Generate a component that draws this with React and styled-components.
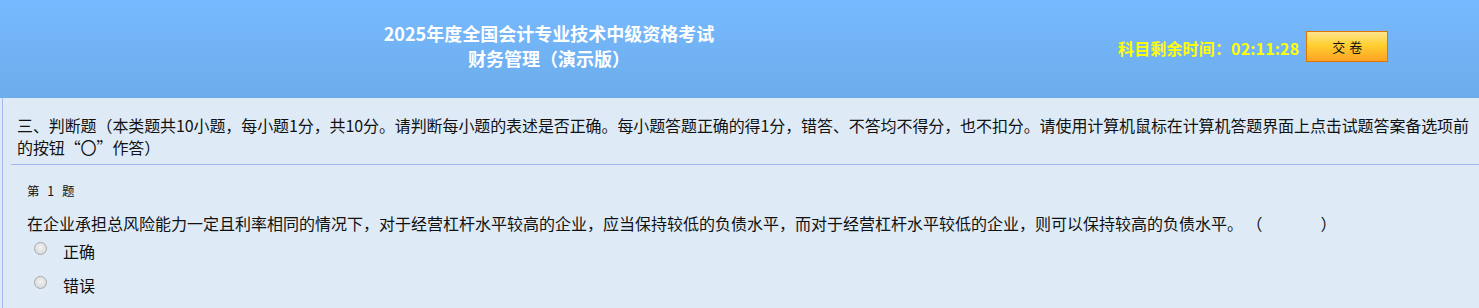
import React from "react";
import styled, { createGlobalStyle } from "styled-components";

const Global = createGlobalStyle`
  html, body { margin: 0; padding: 0; }
  body {
    background: #deebf7;
    font-family: "Noto Sans CJK SC", "Microsoft YaHei", sans-serif;
    color: #111;
    overflow: hidden;
  }
`;

const Header = styled.header`
  height: 98px;
  display: flex;
  align-items: center;
  padding-bottom: 6px;
  box-sizing: border-box;
  background: linear-gradient(to bottom, #77baff 0%, #72b3f5 50%, #6badea 100%);
`;

const Title = styled.div`
  flex: 0 0 1098px;
  text-align: center;
  color: #ffffff;
  font-weight: 700;
  font-size: 18px;
  line-height: 25px;
`;

const TimerArea = styled.div`
  display: flex;
  align-items: center;
  margin-left: 20px;
  gap: 7px;
`;

const Timer = styled.span`
  color: #ffff00;
  font-weight: 700;
  font-size: 16px;
  line-height: 20px;
  padding-top: 3px;
  letter-spacing: 0.15px;
`;

const SubmitButton = styled.button`
  width: 82px;
  height: 31px;
  border: 1.5px solid #e07400;
  background: linear-gradient(to bottom, #fde48f 0%, #ffd030 45%, #ffa224 100%);
  font-family: inherit;
  font-size: 13px;
  color: #111;
  letter-spacing: 4px;
  padding: 0 0 0 4px;
  cursor: pointer;
`;

const Body = styled.main`
  margin-left: 2px;
  border-left: 1px solid #a6b8f0;
  min-height: 210px;
`;

const Instructions = styled.div`
  margin-left: 8px;
  padding: 16px 0 6px 6px;
  border-bottom: 1px solid #a8b8ef;
  font-size: 16px;
  line-height: 22px;
  white-space: nowrap;
  overflow: hidden;
  letter-spacing: -0.1px;
`;

const Question = styled.section`
  padding: 16px 0 0 24px;
`;

const QNumber = styled.div`
  font-size: 12.5px;
  line-height: 20px;
  margin-bottom: 11px;
  word-spacing: 5px;
`;

const QText = styled.div`
  font-size: 16px;
  line-height: 22px;
  white-space: nowrap;
`;

const Blank = styled.span`
  display: inline-block;
  width: 58px;
`;

const Option = styled.label`
  display: flex;
  align-items: center;
  height: 34px;
  padding-left: 7px;
  font-size: 16px;
  cursor: pointer;
`;

const Radio = styled.span`
  width: 11px;
  height: 11px;
  border-radius: 50%;
  border: 1px solid #a9a9a9;
  background: radial-gradient(circle at 50% 40%, #f2f2f2 0%, #dcdcdc 70%, #cfcfcf 100%);
  margin-right: 16px;
  transform: translateY(-3px);
  flex: 0 0 auto;
`;

export default function App() {
  return (
    <>
      <Global />
      <Header>
        <Title>
          <div>2025年度全国会计专业技术中级资格考试</div>
          <div>财务管理（演示版）</div>
        </Title>
        <TimerArea>
          <Timer>科目剩余时间：02:11:28</Timer>
          <SubmitButton>交卷</SubmitButton>
        </TimerArea>
      </Header>
      <Body>
        <Instructions>
          三、判断题（本类题共10小题，每小题1分，共10分。请判断每小题的表述是否正确。每小题答题正确的得1分，错答、不答均不得分，也不扣分。请使用计算机鼠标在计算机答题界面上点击试题答案备选项前
          <br />
          的按钮“〇”作答）
        </Instructions>
        <Question>
          <QNumber>第 1 题</QNumber>
          <QText>
            在企业承担总风险能力一定且利率相同的情况下，对于经营杠杆水平较高的企业，应当保持较低的负债水平，而对于经营杠杆水平较低的企业，则可以保持较高的负债水平。&nbsp;（<Blank />）
          </QText>
          <Option>
            <Radio />
            正确
          </Option>
          <Option>
            <Radio />
            错误
          </Option>
        </Question>
      </Body>
    </>
  );
}
